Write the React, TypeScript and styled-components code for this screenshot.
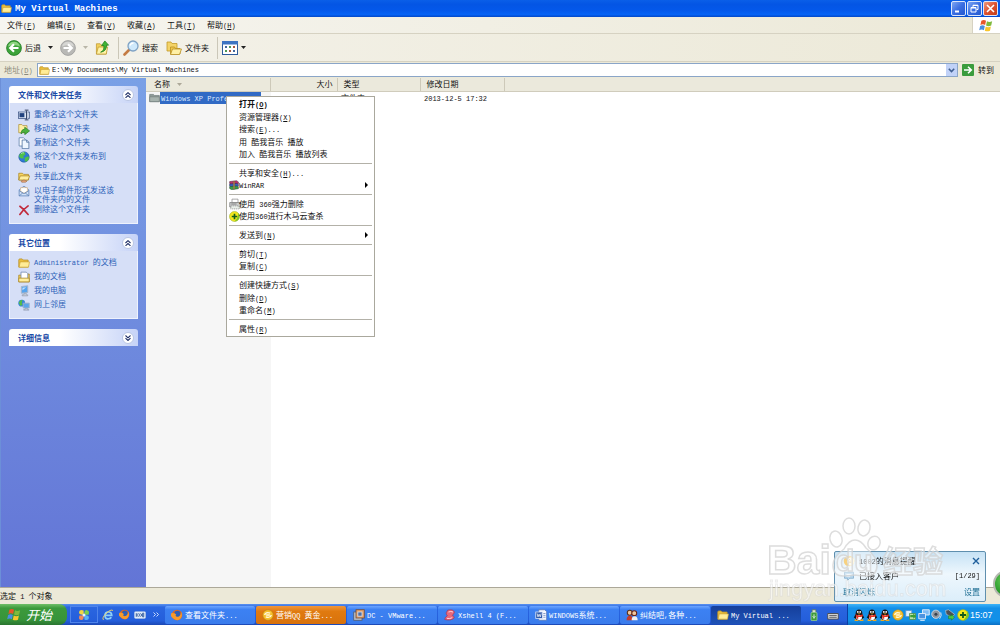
import React from "react";
import styled, { createGlobalStyle } from "styled-components";

const CJK = '"Noto Sans CJK SC", sans-serif';

const GlobalStyle = createGlobalStyle`
  * { box-sizing: border-box; }
  html, body { margin: 0; padding: 0; }
  body { font: 8px/12px ${CJK}; color: #111; overflow: hidden; }
  button, input { font: inherit; color: inherit; margin: 0; padding: 0; border: 0; background: none; }
  button { cursor: pointer; white-space: nowrap; }
  a { text-decoration: none; color: inherit; }
  ul { list-style: none; margin: 0; padding: 0; }
  h2 { margin: 0; font-size: 8px; }
  svg { display: block; flex: none; }
`;

/* ---------- text ---------- */

const Latin = styled.span`
  font-family: "Liberation Mono", ${CJK};
  font-size: 7px;
  line-height: 1;
`;

function Label({ children }: { children: string }) {
  return (
    <>
      {children.split(/([\x20-\x7e]+)/).map((part, i) => {
        if (!part) return null;
        if (i % 2 === 0) return part;
        const m = part.match(/^\(([A-Z])\)(.*)$/);
        return (
          <Latin key={i}>
            {m ? <>(<u>{m[1]}</u>){m[2]}</> : part}
          </Latin>
        );
      })}
    </>
  );
}

/* ---------- icons ---------- */

type IconProps = { size?: number };

const Svg = ({ size = 12, children }: { size?: number; children: React.ReactNode }) => (
  <svg width={size} height={size} viewBox="0 0 16 16" aria-hidden="true">{children}</svg>
);

const Folder = ({ size }: IconProps) => (
  <Svg size={size}>
    <path d="M1 4q0-1.500 1.500-1.500h3L7 4h6.500v9.500H1z" fill="#e9bd3c" stroke="#b8922c" />
    <path d="M1.500 13.500 3 6.500H15.300L14 13.500z" fill="#ffec96" stroke="#c49d33" strokeWidth=".8" />
  </Svg>
);
const GreyFolder = ({ size }: IconProps) => (
  <Svg size={size}>
    <path d="M1 3.500h5.500L8 5h7v9H1z" fill="#8f9b98" stroke="#6e7b7b" />
    <path d="M1 7h14v7H1z" fill="#a7b3ae" stroke="#74807f" />
  </Svg>
);
const FoldersIcon = ({ size }: IconProps) => (
  <Svg size={size}>
    <path d="M1 2h4l1 1.500h5V11H1z" fill="#f4d367" stroke="#c19a2a" strokeWidth=".8" />
    <path d="M4.500 7h4l1 1.500h4.500V14H4.500z" fill="#f1c94f" stroke="#b98f22" strokeWidth=".8" />
    <path d="M4.500 14.500 6.500 9H15.500L13.500 14.500z" fill="#fff0a6" stroke="#b98f22" strokeWidth=".8" />
  </Svg>
);
const Disc = ({ size, tone, flip }: { size: number; tone: "green" | "grey"; flip?: boolean }) => {
  const green = tone === "green";
  return (
    <Svg size={size}>
      <circle cx="8" cy="8" r="7.400" fill={green ? "#3da33a" : "#b9b9b6"} stroke={green ? "#1f7a22" : "#9c9c9a"} strokeWidth=".8" />
      <path d="M2 6.500a6.200 6.200 0 0 1 12 0q-6-3-12 0z" fill={green ? "#8fd482" : "#d6d6d3"} />
      <path
        d="M12.500 8H4.500M8 4.200 4.200 8 8 11.800"
        transform={flip ? "rotate(180 8 8)" : undefined}
        fill="none" stroke="#fff" strokeWidth="2.200"
      />
    </Svg>
  );
};
const UpFolder = ({ size }: IconProps) => (
  <Svg size={size}>
    <path d="M1.500 4h4L7 5.500h5V15H1.500z" fill="#f2d15c" stroke="#c09a30" strokeWidth=".8" />
    <path d="M1.500 15 3.500 7.500h10L12 15z" fill="#fff3a8" stroke="#c09a30" strokeWidth=".8" />
    <path d="M6 13q4-1.500 3.500-7H7L10.500 1l4 4.500h-2.300Q12.500 12 6 13z" fill="#3fb535" stroke="#1d7d1b" strokeWidth=".8" />
  </Svg>
);
const Magnifier = ({ size }: IconProps) => (
  <Svg size={size}>
    <path d="M6.500 9.500 1.500 14.500" stroke="#c47b43" strokeWidth="2.600" strokeLinecap="round" />
    <circle cx="10" cy="6" r="5" fill="#cfe9fb" stroke="#7fa2c4" strokeWidth="1.300" />
    <path d="M7 5.500q1-2.500 3.500-2.500" fill="none" stroke="#fff" strokeWidth="1.300" />
  </Svg>
);
const ViewsIcon = () => (
  <svg width="16" height="14" viewBox="0 0 16 14" aria-hidden="true">
    <rect x=".5" y=".5" width="15" height="13" fill="#fff" stroke="#2f5c9c" />
    <path d="M0 0h16v3.500H0z" fill="#3d74c2" />
    <path d="M3 5h2v2H3zM11 9h2v2h-2z" fill="#44699d" />
    <path d="M7 5h2v2H7zM3 9h2v2H3z" fill="#4e9a55" />
    <path d="M11 5h2v2h-2zM7 9h2v2H7z" fill="#a8563e" />
  </svg>
);
const Flag = ({ size }: IconProps) => (
  <Svg size={size}>
    <path d="M2.500 3q2.700-1.700 5 0L6.500 7.500q-2.300-1.700-5 0z" fill="#e8562a" />
    <path d="M8.500 3.500q2.500 1.500 5.500 0L13 8q-3 1.500-5.500 0z" fill="#7fba3c" />
    <path d="M1.200 8.500q2.700-1.700 5 0L5.200 13q-2.300-1.700-5 0z" fill="#4a8ee0" />
    <path d="M7.200 9q2.500 1.500 5.500 0l-1 4.500q-3 1.500-5.500 0z" fill="#f8c52c" />
  </Svg>
);
const RenameIcon = () => (
  <Svg>
    <rect x=".5" y="4" width="11" height="8.500" fill="#dfe7f6" stroke="#3b5383" />
    <path d="M2 5.500h6.500v5.500H2z" fill="#22437f" />
    <path d="M9 1.500h5M9 14.500h5M11.500 2v12" stroke="#33415f" strokeWidth="1.300" />
    <path d="M13 4h2.500v8.500H13" fill="#cbd4e6" stroke="#3b5383" />
  </Svg>
);
const MoveIcon = () => (
  <Svg>
    <path d="M1 2h4l1.500 1.500H12V13H1z" fill="#fff0a5" stroke="#ad913c" />
    <path d="M4 13q1-5 5-5V5.500l6.500 5L9 15.500V12.500q-3-.5-5 2z" fill="#4bb13e" stroke="#1f771f" strokeWidth=".8" />
  </Svg>
);
const CopyIcon = () => (
  <Svg>
    <path d="M1.500 1h6l2 2V12h-8z" fill="#fff" stroke="#597ca8" />
    <path d="M5.500 4h6l3 3v8.500h-9z" fill="#eef6ff" stroke="#476c9c" />
    <path d="M11.500 4v3h3" fill="none" stroke="#476c9c" />
  </Svg>
);
const GlobeIcon = () => (
  <Svg>
    <circle cx="8" cy="8" r="7" fill="#2f79d4" stroke="#1e5398" strokeWidth=".7" />
    <path d="M2 4.500q3-3.500 7-3l1 3-3 2 1 3-3.500.5L1.500 8zM9 9l4.500-2 1.200 1.500q0 3.500-3 5.500L9 14z" fill="#4fc04a" />
    <path d="M4 3.500q2-1.500 4-1" stroke="#c8f0c4" fill="none" />
  </Svg>
);
const ShareIcon = () => (
  <Svg>
    <path d="M1 3h5l1.500 1.500H14V12H1z" fill="#f7d561" stroke="#a98625" />
    <path d="M1 12 3 6.500h12.500L13.500 12z" fill="#ffef9f" stroke="#a98625" />
    <path d="M4 13.500q4-3 8 0l-2 1.500H5z" fill="#e7a779" stroke="#95623f" strokeWidth=".7" />
  </Svg>
);
const MailIcon = () => (
  <Svg>
    <path d="M1.500 6.500 8 1.500l6.500 5v8h-13z" fill="#cfe0f8" stroke="#5c80b5" />
    <path d="M3.500 3.500h9v5L8 11 3.500 8.500z" fill="#fff" stroke="#d8a768" strokeWidth=".7" />
    <path d="M1.500 7.500 8 11.500l6.500-4M1.500 14.500l5-4M14.500 14.500l-5-4" fill="none" stroke="#5c80b5" />
  </Svg>
);
const DeleteIcon = () => (
  <Svg>
    <path d="M2.500 3q5.500 4 11 11M13.500 2.500Q7 7 2.500 14" fill="none" stroke="#c12a3c" strokeWidth="2.200" strokeLinecap="round" />
  </Svg>
);
const DocsIcon = () => (
  <Svg>
    <path d="M1 5.500h4L6.500 4H15v10.500H1z" fill="#f2cf58" stroke="#a98625" />
    <path d="M4 1.500h7l2 2V11H4z" fill="#fff" stroke="#6d86ad" />
    <path d="M1 14.500V9.500h14v5z" fill="#ffee9d" stroke="#a98625" />
  </Svg>
);
const ComputerIcon = ({ size }: IconProps) => (
  <Svg size={size}>
    <path d="M4.500 2 13 1v9l-8.500 1z" fill="#57a5ee" stroke="#a9b6cb" strokeWidth="1.300" />
    <path d="M6 3.500 11 3l-5 4z" fill="#bfe0ff" />
    <path d="M8 11h3v2h2v1.500H5.500V13H8z" fill="#c9cfdb" stroke="#8792a6" strokeWidth=".7" />
  </Svg>
);
const NetworkIcon = () => (
  <Svg>
    <circle cx="5" cy="5.500" r="4.600" fill="#3a86d6" />
    <path d="M1 4.500q2-3.500 5-3.500L5 5l1 3-3 1z" fill="#52bd48" />
    <path d="M7 5.500h8v6.500H7z" fill="#5ba6ec" stroke="#9fb0c9" strokeWidth="1.200" />
    <path d="M9.500 12.500h3V14h2v1h-7v-1h2z" fill="#c3cad8" stroke="#7f8ba3" strokeWidth=".6" />
  </Svg>
);
const RarIcon = ({ size = 10 }: IconProps) => (
  <Svg size={size}>
    <path d="M1 2.500 12 1l3 2v3L4 7 1 5.500z" fill="#b8326a" stroke="#3c1530" strokeWidth=".7" />
    <path d="M1 6.500 12 5.500l3 1.500v3L4 11 1 9.500z" fill="#3c5fc0" stroke="#1d2347" strokeWidth=".7" />
    <path d="M1 10.500 12 9.500l3 1.500v3L4 15.500 1 13.500z" fill="#3c9a49" stroke="#1c3a20" strokeWidth=".7" />
    <path d="M7 2h2v12.500H7z" fill="#c9a25b" stroke="#5d4217" strokeWidth=".5" />
  </Svg>
);
const ShredIcon = () => (
  <Svg>
    <path d="M4 1.500h8v5H4z" fill="#fff" stroke="#8f8f8f" />
    <path d="M1 6h14v6H1z" fill="#c9cbcb" stroke="#7d7f7f" />
    <path d="M3 10.500h10l1 4H2z" fill="#e9efe9" stroke="#8f8f8f" strokeDasharray="1.500 1" />
    <path d="M3 8h7" stroke="#6d6f6f" />
  </Svg>
);
const Safe360 = ({ size }: IconProps) => (
  <Svg size={size}>
    <circle cx="8" cy="8" r="7.300" fill="#f4e81e" stroke="#8fa81a" strokeWidth=".7" />
    <path d="M8 15.300a7.300 7.300 0 0 0 7.300-7.300q0-3-2-5 0 8-5.300 12.300z" fill="#7cc52b" />
    <path d="M8 4v8M4 8h8" stroke="#145c1d" strokeWidth="2.400" />
  </Svg>
);
const Pinwheel = ({ size }: IconProps) => (
  <Svg size={size}>
    <path d="M7.500 7.500Q1 8 1.500 4t6-2z" fill="#f4d640" />
    <path d="M8.500 7.500Q8 1 12 1.500t2 6z" fill="#77cf50" />
    <path d="M8.500 8.500Q15 8 14.500 12t-6 2z" fill="#5ab0f4" />
    <path d="M7.500 8.500Q8 15 4 14.500t-2-6z" fill="#f08a5b" />
    <circle cx="8" cy="8" r="2" fill="#e7f3ff" />
  </Svg>
);
const IeIcon = ({ size }: IconProps) => (
  <Svg size={size}>
    <path d="M3 8.500h10Q13 4 8.500 4T4 8.700 8.500 13q2.500 0 4-2" fill="none" stroke="#8cd0fb" strokeWidth="2.300" />
    <path d="M2 14.500Q-.5 12 5.500 6T14.500 2" fill="none" stroke="#f6d560" strokeWidth="1.300" />
  </Svg>
);
const Firefox = ({ size }: IconProps) => (
  <Svg size={size}>
    <circle cx="8" cy="8" r="7" fill="#e2681d" />
    <circle cx="8.500" cy="6.500" r="4.200" fill="#2d5fb5" />
    <path d="M1.500 5Q3 6 5 5.500L7 7.500 6 9q1.500 2.500 5 .5 2-1.500 2.500-5.500Q16 9 12.500 13T3 12.500 1.500 5z" fill="#f79a2b" />
  </Svg>
);
const KooBadge = () => (
  <Svg>
    <rect x=".5" y="3.500" width="15" height="9" rx="1.500" fill="#e9f1fb" stroke="#a6bde3" />
    <path d="M3 5.500v5M6 5.500 3.500 8 6 10.500M13 5.500h-1.500v5H13z" fill="none" stroke="#38609f" strokeWidth="1.300" />
    <circle cx="8.500" cy="8" r="1.700" fill="none" stroke="#38609f" strokeWidth="1.200" />
  </Svg>
);
const QqGold = ({ size }: IconProps) => (
  <Svg size={size}>
    <circle cx="8" cy="8" r="7" fill="#f6bf2c" stroke="#b9851a" strokeWidth=".7" />
    <path d="M3.500 8Q5 3.500 11 5.500M12.500 8Q11 12.500 5 10.500M5.500 8h5" fill="none" stroke="#fff8da" strokeWidth="1.800" />
  </Svg>
);
const VmIcon = () => (
  <Svg>
    <rect x="1" y="4" width="11" height="11" fill="#b9bfca" stroke="#4f5666" />
    <rect x="4" y="1" width="11" height="11" fill="#e2a06b" stroke="#6d452b" />
    <rect x="6.500" y="4" width="5.500" height="5.500" fill="#4d6ea6" stroke="#dfe6f2" />
  </Svg>
);
const XshellIcon = () => (
  <Svg>
    <path d="M5 1.500q7-1.500 9 2.500-1 3-3 4.500 3 1 2.500 3.500-4 4-12.500 2 0-3 3.500-5Q2.500 7 3 5z" fill="#e7687c" stroke="#a92f4b" strokeWidth=".8" />
    <path d="M6 4q3-1.500 6 0M4 12.500q4 1 7-1" stroke="#ffd3da" fill="none" strokeWidth="1.300" />
  </Svg>
);
const WordIcon = () => (
  <Svg>
    <path d="M5 1h8l2.500 2.500V15H5z" fill="#f4f8ff" stroke="#5477b4" />
    <rect x="1" y="4" width="9" height="8.500" fill="#315ba9" stroke="#dfe9fb" />
    <path d="M2.800 6 4 10.500 5.500 7 7 10.500 8.300 6" fill="none" stroke="#fff" />
    <path d="M11 6h3M11 8.500h3M11 11h3" stroke="#6b85b9" />
  </Svg>
);
const PeopleIcon = () => (
  <Svg>
    <circle cx="5" cy="5" r="3.300" fill="#f1c79c" stroke="#59301b" strokeWidth="1.400" />
    <circle cx="11" cy="5.500" r="3.300" fill="#f1c79c" stroke="#6a2417" strokeWidth="1.400" />
    <path d="M.8 15q0-6 4.200-6t4 6z" fill="#c33b2d" />
    <path d="M7.500 15q0-5.500 4-5.500t4 5.500z" fill="#f0f0f0" />
  </Svg>
);
const UsbIcon = () => (
  <Svg>
    <path d="M5.500 1h5v4h-5z" fill="#dfe5dd" stroke="#56734d" />
    <rect x="4" y="4.500" width="8" height="11" rx="1.500" fill="#3f9b3b" stroke="#a6d79d" />
    <path d="M8 7v6M6 9.500l2 2 2-2" stroke="#fff" fill="none" />
  </Svg>
);
const KeyboardIcon = () => (
  <Svg>
    <path d="M1 6h14v7.500H1z" fill="#e2e2e0" stroke="#46474c" strokeWidth="1.200" />
    <path d="M3 8.500h10M3 11h10" stroke="#4b4c52" strokeWidth="1.200" />
  </Svg>
);
const Penguin = () => (
  <Svg>
    <path d="M2.500 13.500H7.500V16H2zM8.500 13.500h5L14 16H8.500z" fill="#f4a91c" />
    <path d="M8 .5q4.500 0 4.500 6l2.500 5-1.500.5Q12 15 8 15T2.500 12L1 11.500l2.500-5q0-6 4.500-6z" fill="#15161b" />
    <path d="M8 8q4 0 4 3.500T8 14.500t-4-3T8 8z" fill="#fff" />
    <circle cx="6.400" cy="3.900" r="1.200" fill="#fff" /><circle cx="9.600" cy="3.900" r="1.200" fill="#fff" />
    <path d="M5.500 6h5L8 7.300z" fill="#f6b51e" />
    <path d="M3 7Q8 10 13 7v2.500Q9 11 7 10.500V13H4.500V10z" fill="#e5321f" />
  </Svg>
);
const SwapIcon = () => (
  <Svg>
    <path d="M1 2h8v8H1z" fill="#dcefff" stroke="#5f93c9" /><path d="M6 6h8v8H6z" fill="#b9e0a6" stroke="#4e8e46" />
    <path d="M7 8h4V6l4 3.500L11 13v-2H7z" fill="#3b9d36" />
  </Svg>
);
const NetPcs = () => (
  <Svg>
    <path d="M6 1h9v7H6z" fill="#7fbcf5" stroke="#e3eefa" strokeWidth="1.200" />
    <path d="M1 6h9v7H1z" fill="#4d93e0" stroke="#e3eefa" strokeWidth="1.200" /><path d="M3 15h6" stroke="#e3eefa" strokeWidth="1.500" />
  </Svg>
);
const Speaker = () => (
  <Svg>
    <circle cx="6.500" cy="7" r="5.500" fill="#8e96a0" stroke="#e5e9ef" />
    <circle cx="6.500" cy="7" r="2" fill="#39414d" />
    <path d="M13 4.500q2 4-1.500 8.500" fill="none" stroke="#e5e9ef" strokeWidth="1.200" />
  </Svg>
);
const PlugIcon = () => (
  <Svg>
    <path d="M2 2l4-1 8 6-3 4-8-4z" fill="#4a5057" stroke="#c9d2da" strokeWidth=".8" />
    <path d="M6 9h4V7l4 4-4 4v-2H6z" fill="#4bc445" stroke="#17701b" strokeWidth=".6" />
  </Svg>
);
const Crescent = () => (
  <Svg>
    <circle cx="8" cy="8" r="7" fill="#f3b32a" />
    <path d="M15 5a5.500 5.500 0 1 0-3 9q3-1 3-5z" fill="#fdf3d2" />
    <path d="M8 5.500 9.500 7M8 9.500h3" stroke="#b9851a" />
  </Svg>
);
const Bubble = () => (
  <Svg>
    <path d="M2 3h12v8H9l-3 3v-3H2z" fill="#b7d7ee" stroke="#7fa9c9" />
    <path d="M4.500 6h7M4.500 8.500h5" stroke="#fff" />
  </Svg>
);

const Caret = ({ color = "#222" }: { color?: string }) => (
  <svg width="5" height="3" viewBox="0 0 5 3" aria-hidden="true"><path d="M0 0h5L2.500 3z" fill={color} /></svg>
);

/* ---------- window frame ---------- */

const Desktop = styled.div`
  display: flex;
  flex-direction: column;
  min-height: 100vh;
  background: #ece9d8;
`;
const TitleBar = styled.header`
  display: flex;
  align-items: center;
  gap: 3px;
  height: 17px;
  padding: 0 2px 0 1px;
  background: linear-gradient(#0a5fe8, #0455e4 25%, #0458ea 60%, #0663f5 85%, #0348c8);
`;
const Title = styled.h1`
  flex: 1;
  margin: 0;
  font: bold 9px/16px "Liberation Mono", monospace;
  color: #fff;
`;
const WindowButtons = styled.div`
  display: flex;
  gap: 1px;
`;
const WindowButton = styled.button<{ $close?: boolean }>`
  display: grid;
  place-items: center;
  width: 15px;
  height: 15px;
  border: 1px solid #d9e5fb;
  border-radius: 2px;
  background: ${(p) =>
    p.$close ? "linear-gradient(135deg, #eb9a80, #dc5230 50%, #c23d17)" : "linear-gradient(135deg, #7ea6f2, #3a6ee2 50%, #2458cf)"};
`;

const MenuRow = styled.div`
  display: flex;
  height: 17px;
  border-bottom: 1px solid #d6d2c2;
`;
const MenuBar = styled.nav`
  display: flex;
  flex: 1;
  gap: 12px;
  padding-left: 7px;
  border-right: 1px solid #d6d2c2;
  background: linear-gradient(90deg, #f6f5f0, #ece9d8);
`;
const MenuButton = styled.button`
  width: 28px;
  text-align: left;
`;
const LogoCell = styled.div`
  display: grid;
  place-items: center;
  width: 27px;
  background: #fff;
`;

const Toolbar = styled.div`
  display: flex;
  align-items: center;
  gap: 8px;
  height: 28px;
  padding-left: 6px;
  border-bottom: 1px solid #d6d2c2;
  background: linear-gradient(90deg, #f4f2ea, #ece9d8);
`;
const ToolGroup = styled.div`
  display: flex;
  align-items: center;
`;
const ToolButton = styled.button`
  display: flex;
  align-items: center;
  gap: 3px;
  height: 20px;
`;
const DropButton = styled.button`
  display: grid;
  place-items: center;
  width: 19px;
  height: 20px;
`;
const ToolSection = styled.div`
  display: flex;
  align-items: center;
  gap: 8px;
  height: 22px;
  padding-left: 4px;
  border-left: 1px solid #cbc7b8;
`;

const AddressBar = styled.form`
  display: flex;
  align-items: center;
  gap: 4px;
  height: 16px;
  padding: 0 6px 0 4px;
`;
const AddressLabel = styled.label`
  width: 29px;
  color: #8b897c;
  white-space: nowrap;
`;
const AddressField = styled.div`
  display: flex;
  flex: 1;
  align-items: center;
  gap: 2px;
  height: 14px;
  padding-left: 1px;
  border: 1px solid #8aa5c8;
  background: #fff;
`;
const AddressInput = styled.input`
  flex: 1;
  height: 12px;
  font: 7px/12px "Liberation Mono", ${CJK};
  outline: 0;
`;
const FieldArrow = styled.button`
  display: grid;
  place-items: center;
  width: 11px;
  height: 12px;
  background: #c1d2f8;
`;
const GoButton = styled.button`
  display: flex;
  align-items: center;
  gap: 4px;
`;

/* ---------- task pane ---------- */

const Body = styled.div`
  display: flex;
  flex: 1;
`;
const TaskPane = styled.aside`
  display: flex;
  flex-direction: column;
  gap: 10px;
  width: 146px;
  padding: 8px;
  border-left: 1px solid #6c8fd8;
  background: linear-gradient(#7aa0e6, #6375d6);
`;
const PaneHead = styled.div`
  display: flex;
  align-items: center;
  justify-content: space-between;
  height: 17px;
  padding: 0 4px 0 9px;
  border-radius: 3px 3px 0 0;
  background: linear-gradient(90deg, #fff 40%, #c6d3f7);
  color: #1a4aa6;
`;
const RoundToggle = styled.button`
  display: grid;
  place-items: center;
  width: 12px;
  height: 12px;
  border: 1px solid #b9c6e4;
  border-radius: 6px;
  background: #fff;
`;
const PaneList = styled.ul`
  display: flex;
  flex-direction: column;
  gap: 1px;
  padding: 6px 8px;
  border: 1px solid #eef2fd;
  border-top: 0;
  background: #d6dff7;
  color: #2c5fb8;
`;
const PaneLink = styled.a`
  display: flex;
  gap: 4px;
  min-height: 13px;
  line-height: 9px;
  white-space: pre-line;
`;

function Pane({ title, open, items }: { title: string; open: boolean; items: [React.ReactNode, string][] }) {
  return (
    <section>
      <PaneHead>
        <h2>{title}</h2>
        <RoundToggle aria-label={title}>
          <svg width="6" height="6" viewBox="0 0 6 6">
            <path
              d={open ? "M.5 3 3 .7 5.500 3M.5 5.800 3 3.500 5.500 5.800" : "M.5.5 3 2.800 5.500.5M.5 3.200 3 5.500 5.500 3.200"}
              fill="none" stroke="#1f2f66" strokeWidth="1.100"
            />
          </svg>
        </RoundToggle>
      </PaneHead>
      {open && (
        <PaneList>
          {items.map(([icon, text]) => (
            <li key={text}>
              <PaneLink href="#">
                {icon}
                <span><Label>{text}</Label></span>
              </PaneLink>
            </li>
          ))}
        </PaneList>
      )}
    </section>
  );
}

/* ---------- file list ---------- */

const FileArea = styled.main`
  position: relative;
  flex: 1;
  background: linear-gradient(#f6f6f6, #f6f6f6) no-repeat 0 0 / 125px 100% #fff;
`;
const FileTable = styled.table`
  width: 100%;
  table-layout: fixed;
  border-collapse: collapse;
  text-align: left;

  th {
    height: 13px;
    padding: 0 4px 0 6px;
    font-weight: normal;
    background: #ebe9dc;
    border-right: 1px solid #cdc9b9;
    border-bottom: 1px solid #d0ccbc;
  }
  th:first-child { padding-left: 8px; }
  th:last-child { border-right: 0; }
  td {
    height: 12px;
    padding: 0 4px;
    line-height: 11px;
    white-space: nowrap;
  }
  td:first-child { padding: 0 0 0 3px; }
`;
const SortHead = styled.span`
  display: flex;
  align-items: center;
  gap: 7px;
`;
const FileName = styled.span`
  display: flex;
  align-items: center;
`;
const Selected = styled.span`
  min-width: 101px;
  padding-left: 1px;
  line-height: 12px;
  background: #316ac5;
  color: #dbe8ff;
`;

const ContextMenu = styled.div`
  position: absolute;
  left: 80px;
  top: 18px;
  display: flex;
  flex-direction: column;
  width: 149px;
  height: 241px;
  padding: 1px 2px;
  border: 1px solid #aaa89d;
  background: #fff;
`;
const MenuItem = styled.button<{ $bold?: boolean }>`
  display: flex;
  flex: 2 1 0;
  align-items: center;
  min-height: 0;
  padding-right: 4px;
  font-weight: ${(p) => (p.$bold ? "bold" : "normal")};
`;
const MenuText = styled.span`
  flex: 1;
  text-align: left;
  white-space: pre;
`;
const MenuIcon = styled.span`
  display: grid;
  place-items: center;
  width: 10px;
`;
const MenuRule = styled.hr`
  flex: 1 1 0;
  width: 100%;
  min-height: 0;
  margin: 0;
  border: 0;
  background: linear-gradient(#b3b1a8, #b3b1a8) no-repeat center / 100% 1px;
`;

type Entry = { text: string; bold?: boolean; icon?: React.ReactNode; sub?: boolean } | null;
const menuEntries: Entry[] = [
  { text: "打开(O)", bold: true },
  { text: "资源管理器(X)" },
  { text: "搜索(E)..." },
  { text: "用 酷我音乐 播放" },
  { text: "加入 酷我音乐 播放列表" },
  null,
  { text: "共享和安全(H)..." },
  { text: "WinRAR", icon: <RarIcon />, sub: true },
  null,
  { text: "使用 360强力删除", icon: <ShredIcon /> },
  { text: "使用360进行木马云查杀", icon: <Safe360 size={11} /> },
  null,
  { text: "发送到(N)", sub: true },
  null,
  { text: "剪切(T)" },
  { text: "复制(C)" },
  null,
  { text: "创建快捷方式(S)" },
  { text: "删除(D)" },
  { text: "重命名(M)" },
  null,
  { text: "属性(R)" },
];

/* ---------- status bar and taskbar ---------- */

const StatusBar = styled.footer`
  height: 17px;
  border-top: 1px solid #aca899;
  line-height: 16px;
`;
const Taskbar = styled.div`
  display: flex;
  align-items: stretch;
  height: 21px;
  color: #fff;
  background: linear-gradient(#5b93f0, #2a66e0 15%, #245edb 80%, #1c48b4);
`;
const StartButton = styled.button`
  display: flex;
  align-items: center;
  gap: 4px;
  width: 67px;
  padding-left: 7px;
  border-radius: 0 8px 8px 0;
  background: linear-gradient(#6fbf68, #3c9a3c 20%, #37943a 75%, #2a7530);
  font: italic 13px/18px ${CJK};
  color: #fff;
`;
const QuickLaunch = styled.div`
  display: flex;
  align-items: center;
  gap: 4px;
  width: 98px;
  padding-left: 3px;
`;
const QuickButton = styled.button<{ $wide?: boolean }>`
  display: grid;
  place-items: center;
  width: ${(p) => (p.$wide ? 28 : 12)}px;
  height: 17px;
  border: ${(p) => (p.$wide ? "1px solid #4f84ea" : "0")};
`;
const Tasks = styled.div`
  display: flex;
  flex: 1;
  align-items: center;
  gap: 1px;
`;
const TaskButton = styled.button<{ $kind?: "alert" | "active" }>`
  display: flex;
  flex: 1 1 0;
  align-items: center;
  gap: 2px;
  min-width: 0;
  height: 18px;
  padding-left: 6px;
  border-radius: 2px;
  overflow: hidden;
  color: #fff;
  background: ${(p) =>
    p.$kind === "alert" ? "linear-gradient(#f0963a, #e07a10 30%, #d8720c)"
    : p.$kind === "active" ? "linear-gradient(#153f9b, #1e52b7)"
    : "linear-gradient(#6ba4ff, #3c81f3 20%, #3a7cec)"};
`;
const Extras = styled.div`
  display: flex;
  align-items: center;
  gap: 7px;
  width: 46px;
  padding-left: 7px;
`;
const Tray = styled.div`
  display: flex;
  align-items: center;
  gap: 1px;
  width: 153px;
  padding-left: 5px;
  border-left: 1px solid #0b3fa3;
  background: linear-gradient(#3db4f8, #1390e8 20%, #1290e8 80%, #0c70c4);
`;
const Clock = styled.time`
  font: 9px/12px "Liberation Sans", sans-serif;
`;

const tasks: { icon: React.ReactNode; text: string; kind?: "alert" | "active" }[] = [
  { icon: <Firefox />, text: "查看文件夹..." },
  { icon: <QqGold />, text: "营销QQ 黄金...", kind: "alert" },
  { icon: <VmIcon />, text: "DC - VMware..." },
  { icon: <XshellIcon />, text: "Xshell 4 (F..." },
  { icon: <WordIcon />, text: "WINDOWS系统..." },
  { icon: <PeopleIcon />, text: "纠结吧,各种..." },
  { icon: <Folder />, text: "My Virtual ...", kind: "active" },
];

/* ---------- overlays ---------- */

const Toast = styled.section`
  position: fixed;
  right: 14px;
  bottom: 23px;
  display: grid;
  grid-template-rows: repeat(3, 1fr);
  width: 152px;
  height: 51px;
  padding: 1px 5px 1px 8px;
  border: 1px solid #5f8fae;
  border-radius: 2px;
  background: linear-gradient(#c6e2f5, #eef7fd 45%, #dceefa);
`;
const ToastRow = styled.div`
  display: flex;
  align-items: center;
  gap: 4px;
`;
const Spacer = styled.span`
  flex: 1;
`;
const ToastLink = styled.a`
  color: #1d6d92;
`;
const Orb = styled.div`
  position: fixed;
  right: -21px;
  bottom: 27px;
  width: 28px;
  height: 28px;
  border: 2px solid #b5b8b0;
  border-radius: 14px;
  background: radial-gradient(circle at 40% 35%, #6ad05b, #2a9a2b 60%);
`;
const Watermark = styled.svg`
  position: fixed;
  right: 52px;
  bottom: 19px;
  pointer-events: none;
`;

const paneTasks: [React.ReactNode, string][] = [
  [<RenameIcon />, "重命名这个文件夹"],
  [<MoveIcon />, "移动这个文件夹"],
  [<CopyIcon />, "复制这个文件夹"],
  [<GlobeIcon />, "将这个文件夹发布到\nWeb"],
  [<ShareIcon />, "共享此文件夹"],
  [<MailIcon />, "以电子邮件形式发送该\n文件夹内的文件"],
  [<DeleteIcon />, "删除这个文件夹"],
];
const panePlaces: [React.ReactNode, string][] = [
  [<Folder />, "Administrator 的文档"],
  [<DocsIcon />, "我的文档"],
  [<ComputerIcon />, "我的电脑"],
  [<NetworkIcon />, "网上邻居"],
];

export default function App() {
  return (
    <Desktop>
      <GlobalStyle />
      <TitleBar>
        <Folder size={11} />
        <Title>My Virtual Machines</Title>
        <WindowButtons>
          <WindowButton aria-label="最小化">
            <svg width="9" height="9" viewBox="0 0 9 9"><path d="M1 7.500h4" stroke="#fff" strokeWidth="2" /></svg>
          </WindowButton>
          <WindowButton aria-label="还原">
            <svg width="9" height="9" viewBox="0 0 9 9">
              <path d="M3 3V1.200h5V5.500H6.500M1 3.500h5V8H1zM1 4h5M3 1.500h5" fill="none" stroke="#fff" />
            </svg>
          </WindowButton>
          <WindowButton $close aria-label="关闭">
            <svg width="9" height="9" viewBox="0 0 9 9"><path d="M1 1l7 7M8 1 1 8" stroke="#fff" strokeWidth="1.600" /></svg>
          </WindowButton>
        </WindowButtons>
      </TitleBar>

      <MenuRow>
        <MenuBar>
          {["文件(F)", "编辑(E)", "查看(V)", "收藏(A)", "工具(T)", "帮助(H)"].map((m) => (
            <MenuButton key={m}><Label>{m}</Label></MenuButton>
          ))}
        </MenuBar>
        <LogoCell><Flag size={15} /></LogoCell>
      </MenuRow>

      <Toolbar>
        <ToolGroup>
          <ToolButton><Disc size={16} tone="green" />后退</ToolButton>
          <DropButton aria-label="后退列表"><Caret /></DropButton>
          <ToolButton aria-label="前进"><Disc size={16} tone="grey" flip /></ToolButton>
          <DropButton aria-label="前进列表"><Caret color="#b9b6a8" /></DropButton>
          <ToolButton aria-label="向上"><UpFolder size={15} /></ToolButton>
        </ToolGroup>
        <ToolSection>
          <ToolButton><Magnifier size={16} />搜索</ToolButton>
          <ToolButton><FoldersIcon size={16} />文件夹</ToolButton>
        </ToolSection>
        <ToolSection>
          <ToolButton aria-label="查看"><ViewsIcon /><Caret /></ToolButton>
        </ToolSection>
      </Toolbar>

      <AddressBar onSubmit={(e) => e.preventDefault()}>
        <AddressLabel htmlFor="address"><Label>地址(D)</Label></AddressLabel>
        <AddressField>
          <Folder size={11} />
          <AddressInput id="address" defaultValue="E:\My Documents\My Virtual Machines" />
          <FieldArrow type="button" aria-label="地址列表">
            <svg width="7" height="5" viewBox="0 0 7 5"><path d="M.8.8 3.500 3.500 6.200.8" fill="none" stroke="#3f5f92" strokeWidth="1.600" /></svg>
          </FieldArrow>
        </AddressField>
        <GoButton>
          <svg width="12" height="12" viewBox="0 0 12 12">
            <rect width="12" height="12" rx="1" fill="#3a9c3c" />
            <path d="M2 6h7M6 2.800 9.300 6 6 9.200" fill="none" stroke="#fff" strokeWidth="1.600" />
          </svg>
          转到
        </GoButton>
      </AddressBar>

      <Body>
        <TaskPane>
          <Pane title="文件和文件夹任务" open items={paneTasks} />
          <Pane title="其它位置" open items={panePlaces} />
          <Pane title="详细信息" open={false} items={[]} />
        </TaskPane>
        <FileArea>
          <FileTable>
            <colgroup>
              <col width="124" /><col width="67" /><col width="83" /><col width="84" /><col />
            </colgroup>
            <thead>
              <tr>
                <th><SortHead>名称<Caret color="#aca899" /></SortHead></th>
                <th align="right">大小</th>
                <th>类型</th>
                <th>修改日期</th>
                <th aria-label="其它" />
              </tr>
            </thead>
            <tbody>
              <tr>
                <td>
                  <FileName><GreyFolder size={11} /><Selected><Label>Windows XP Professional</Label></Selected></FileName>
                </td>
                <td />
                <td>文件夹</td>
                <td><Label>2013-12-5 17:32</Label></td>
                <td />
              </tr>
            </tbody>
          </FileTable>
          <ContextMenu role="menu">
            {menuEntries.map((e, i) =>
              e ? (
                <MenuItem key={i} role="menuitem" $bold={e.bold}>
                  <MenuIcon>{e.icon}</MenuIcon>
                  <MenuText><Label>{e.text}</Label></MenuText>
                  {e.sub && <svg width="3" height="6" viewBox="0 0 3 6"><path d="M0 0v6l3-3z" fill="#000" /></svg>}
                </MenuItem>
              ) : (
                <MenuRule key={i} />
              )
            )}
          </ContextMenu>
        </FileArea>
      </Body>

      <StatusBar><Label>选定 1 个对象</Label></StatusBar>

      <Taskbar>
        <StartButton><Flag size={15} />开始</StartButton>
        <QuickLaunch>
          <QuickButton $wide aria-label="应用"><Pinwheel /></QuickButton>
          <QuickButton aria-label="浏览器"><IeIcon /></QuickButton>
          <QuickButton aria-label="火狐"><Firefox size={11} /></QuickButton>
          <QuickButton aria-label="酷我"><KooBadge /></QuickButton>
          <QuickButton aria-label="更多">
            <svg width="6" height="5" viewBox="0 0 6 5"><path d="M.5.5l2 2-2 2M3.500.5l2 2-2 2" fill="none" stroke="#dfeaff" strokeWidth=".9" /></svg>
          </QuickButton>
        </QuickLaunch>
        <Tasks>
          {tasks.map((t) => (
            <TaskButton key={t.text} $kind={t.kind}>{t.icon}<span><Label>{t.text}</Label></span></TaskButton>
          ))}
        </Tasks>
        <Extras><UsbIcon /><KeyboardIcon /></Extras>
        <Tray>
          <Penguin /><Penguin /><Penguin />
          <QqGold /><SwapIcon /><NetPcs /><Speaker /><PlugIcon /><Safe360 />
          <Clock>15:07</Clock>
        </Tray>
      </Taskbar>

      <Toast>
        <ToastRow>
          <Crescent />
          <span><Label>1002的消息提醒</Label></span>
          <Spacer />
          <button aria-label="关闭提醒">
            <svg width="8" height="8" viewBox="0 0 8 8"><path d="M1 1l6 6M7 1 1 7" stroke="#1f5f9c" strokeWidth="1.400" /></svg>
          </button>
        </ToastRow>
        <ToastRow>
          <Bubble />
          <span>已接入客户</span>
          <Spacer />
          <Label>[1/29]</Label>
        </ToastRow>
        <ToastRow>
          <ToastLink href="#">取消闪烁</ToastLink>
          <Spacer />
          <ToastLink href="#">设置</ToastLink>
        </ToastRow>
      </Toast>
      <Orb />
      <Watermark width="182" height="90" viewBox="0 0 182 90" aria-hidden="true">
        <g fill="#fff" fillOpacity=".4" stroke="#d2d2d2" strokeOpacity=".75" strokeWidth="1.500">
          <ellipse cx="70" cy="23" rx="6" ry="8" transform="rotate(-15 70 23)" />
          <ellipse cx="83" cy="10" rx="6" ry="8" />
          <ellipse cx="98" cy="12" rx="6" ry="8" transform="rotate(12 98 12)" />
          <ellipse cx="108" cy="27" rx="6" ry="7" transform="rotate(25 108 27)" />
          <path d="M89 24q6 0 11 8 11 9 11 17 0 11-10 11-6 0-12-1-6 1-12 1-10 0-10-11 0-8 11-16 5-9 11-9z" />
          <text x="1" y="58" fontFamily="Liberation Sans, sans-serif" fontWeight="bold" fontSize="41">Bai</text>
          <text x="70" y="55" fontFamily="Liberation Sans, sans-serif" fontWeight="bold" fontSize="30">du</text>
          <text x="117" y="56" fontFamily="Noto Sans CJK SC, sans-serif" fontWeight="bold" fontSize="30">经验</text>
        </g>
        <text x="3" y="80" fill="#fff" fillOpacity=".6" stroke="#cfcfcf" strokeOpacity=".4" strokeWidth="1" fontFamily="Liberation Sans, sans-serif" fontSize="22">jingyan.baidu.com</text>
      </Watermark>
    </Desktop>
  );
}
